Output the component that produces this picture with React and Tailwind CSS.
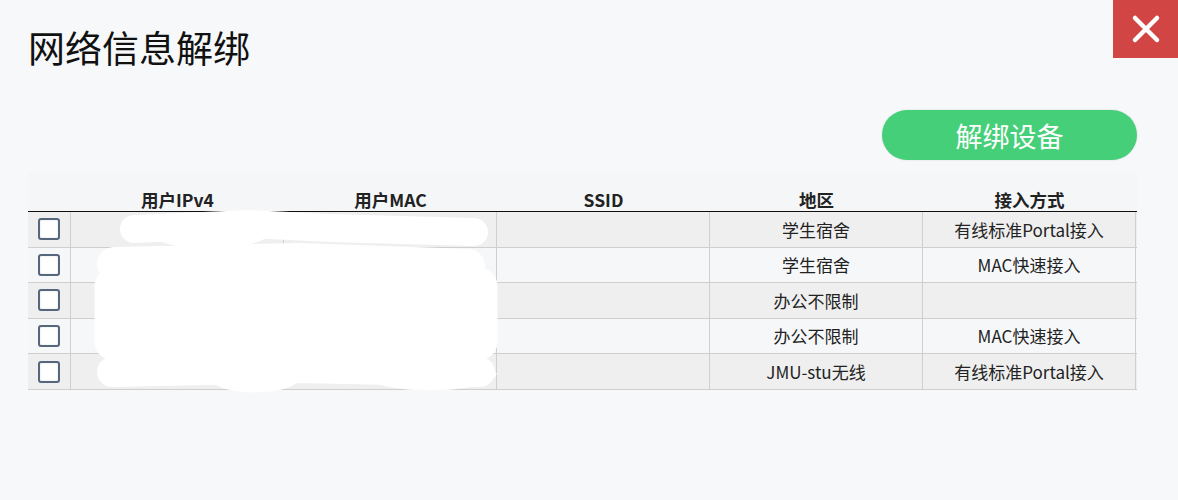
import React from "react";

const rows = [
  { area: "学生宿舍", mode: "有线标准Portal接入" },
  { area: "学生宿舍", mode: "MAC快速接入" },
  { area: "办公不限制", mode: "" },
  { area: "办公不限制", mode: "MAC快速接入" },
  { area: "JMU-stu无线", mode: "有线标准Portal接入" },
];

const headers = ["用户IPv4", "用户MAC", "SSID", "地区", "接入方式"];

const Checkbox = () => (
  <div className="w-[22px] h-[22px] rounded-[3px] border-2 border-[#56677d] bg-white shadow-[inset_0_0_2px_rgba(0,0,0,0.15)]" />
);

// white scribble that hides the addresses in the screenshot
const Redaction = () => (
  <svg
    className="absolute left-[62px] top-[38px] pointer-events-none"
    width="420"
    height="190"
    viewBox="90 210 420 190"
  >
    <g fill="#ffffff" stroke="#ffffff" strokeLinecap="round" strokeLinejoin="round">
      <path d="M134 229 L250 224 L330 228 L474 232" strokeWidth="28" fill="none" />
      <path d="M114 264 L300 260 L468 266" strokeWidth="34" fill="none" />
      <rect x="95" y="268" width="402" height="92" rx="18" />
      <path d="M112 372 L300 368 L480 372" strokeWidth="30" fill="none" />
      <ellipse cx="255" cy="378" rx="44" ry="14" />
      <ellipse cx="430" cy="374" rx="66" ry="16" />
      <ellipse cx="210" cy="232" rx="60" ry="16" />
    </g>
  </svg>
);

const App = () => {
  return (
    <div
      className="w-[1178px] h-[500px] bg-[#f6f8fa] relative overflow-hidden text-[#222]"
      style={{ fontFamily: '"Microsoft YaHei", "Noto Sans CJK SC", "Noto Sans", sans-serif' }}
    >
      {/* close button */}
      <button className="absolute right-0 top-0 w-[65px] h-[58px] bg-[#d24545] flex items-center justify-center">
        <svg width="30" height="30" viewBox="0 0 30 30">
          <path d="M4 4 L26 26 M26 4 L4 26" stroke="#ffffff" strokeWidth="4.5" strokeLinecap="round" />
        </svg>
      </button>

      <div className="pl-[28px] pr-[41px] pt-[22px]">
        <h1 className="text-[37px] leading-[50px] font-normal text-[#111]">网络信息解绑</h1>

        <div className="flex justify-end mt-[38px]">
          <button className="w-[255px] h-[50px] rounded-full bg-[#45cf79] text-white text-[27px] leading-none shadow-[0_0_2px_rgba(0,0,0,0.15)]">
            解绑设备
          </button>
        </div>

        <div className="relative mt-[12px] w-[1109px]">
          <div className="grid grid-cols-[43px_repeat(5,213px)] h-[40px] items-end border-b border-[#111] bg-[#f4f6f8]">
            <div />
            {headers.map((h) => (
              <div key={h} className="text-center font-bold text-[17.5px] leading-[20px] pb-[1px]">
                {h}
              </div>
            ))}
          </div>

          {rows.map((r, i) => (
            <div
              key={i}
              className={`grid grid-cols-[43px_repeat(5,213px)] h-[35.6px] border-b border-[#cfcfcf] text-[17px] ${
                i % 2 === 0 ? "bg-[#efefef]" : "bg-[#f6f7f9]"
              }`}
            >
              <div className="flex items-center justify-center border-r border-[#cfcfcf]">
                <Checkbox />
              </div>
              <div className="border-r border-[#cfcfcf]" />
              <div className="border-r border-[#cfcfcf]" />
              <div className="border-r border-[#cfcfcf]" />
              <div className="flex items-center justify-center border-r border-[#cfcfcf]">{r.area}</div>
              <div className="flex items-center justify-center border-r border-[#cfcfcf]">{r.mode}</div>
            </div>
          ))}

          <Redaction />
        </div>
      </div>
    </div>
  );
};

export default App;
